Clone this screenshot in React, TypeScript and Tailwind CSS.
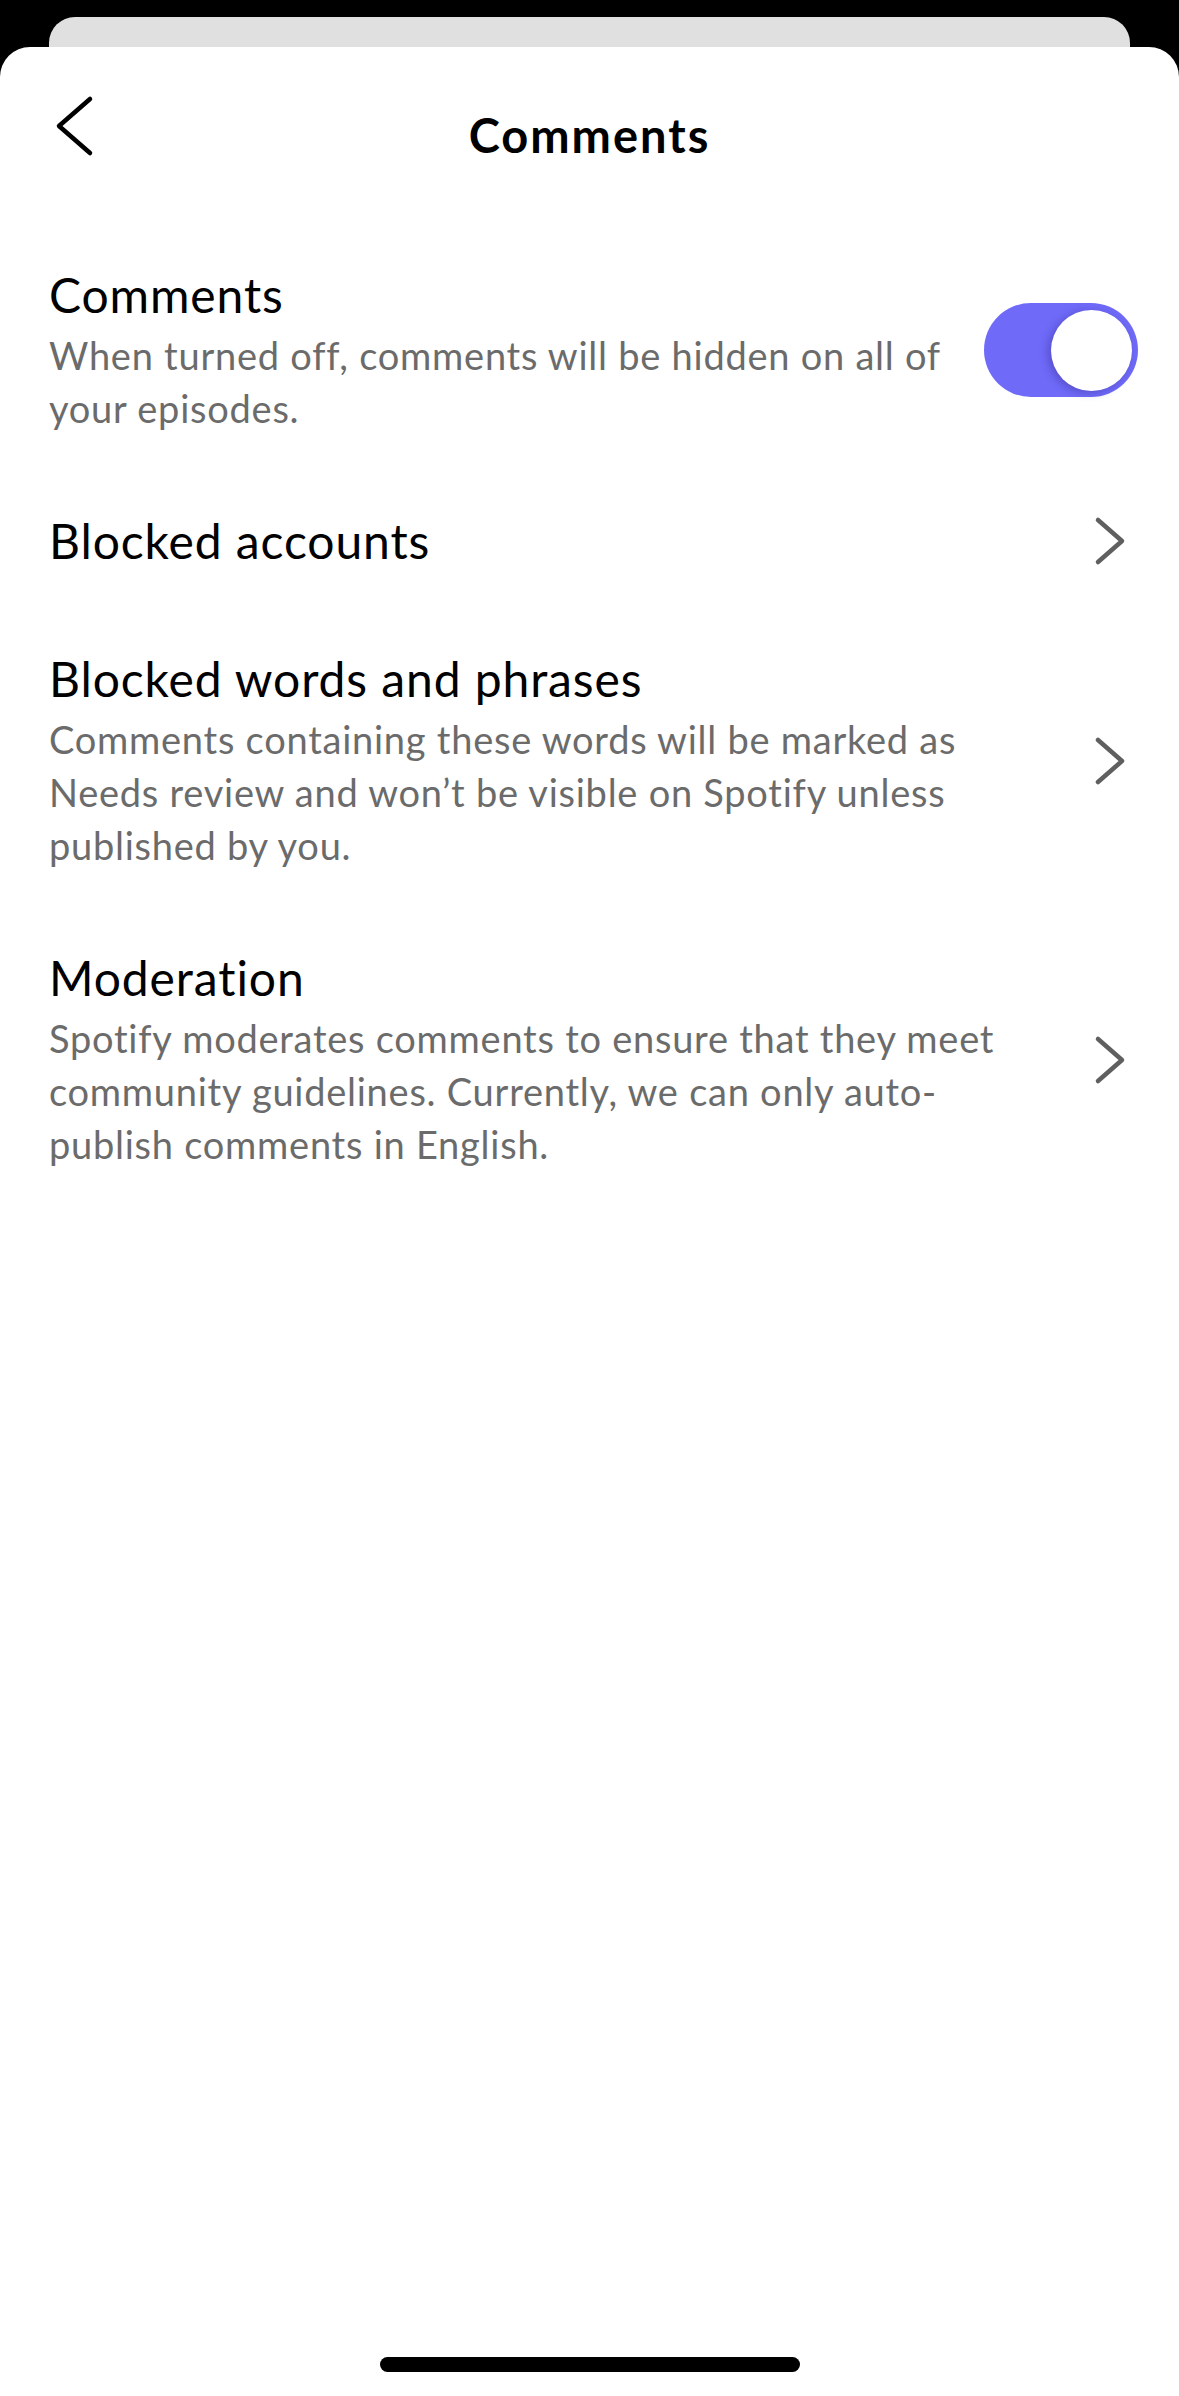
import React from "react";

const font = { fontFamily: "Lato, 'Noto Sans', sans-serif" };

function Chevron() {
  return (
    <svg width="40" height="56" viewBox="0 0 40 56" className="mr-[8px] shrink-0">
      <path d="M10 7 L34 28 L10 49" fill="none" stroke="#5f5f5f" strokeWidth="4.5" strokeLinecap="round" strokeLinejoin="round" />
    </svg>
  );
}

function Row({ title, lines, right, extraBottom }: { title: string; lines?: string[]; right: React.ReactNode; extraBottom?: boolean }) {
  return (
    <div className={`flex items-center justify-between pl-[49px] pr-[43px] pt-[38px] ${extraBottom ? "pb-[40px]" : "pb-[38px]"}`}>
      <div className="flex flex-col">
        <div className="text-[48px] leading-[60px] tracking-[0.9px] text-black whitespace-nowrap">{title}</div>
        {lines && (
          <div className="mt-[4px] text-[38px] leading-[53px] tracking-[0.75px] text-[#6b6b6b]">
            {lines.map((l, i) => (
              <div key={i} className="whitespace-nowrap">{l}</div>
            ))}
          </div>
        )}
      </div>
      {right}
    </div>
  );
}

function Toggle() {
  return (
    <div className="-mr-[2px] flex h-[94px] w-[154px] shrink-0 items-center justify-end rounded-full bg-[#6f6af8] pr-[6px]">
      <div className="h-[81px] w-[81px] rounded-full bg-white shadow-[-3px_2px_8px_rgba(40,30,120,0.35)]" />
    </div>
  );
}

export default function App() {
  return (
    <div className="flex h-[2396px] w-full flex-col bg-black" style={font}>
      <div className="mx-[49px] mt-[17px] h-[30px] shrink-0 rounded-t-[26px] bg-[#e0e0e0]" />
      <div className="flex flex-1 flex-col rounded-t-[30px] bg-white">
        <div className="grid h-[180px] grid-cols-[1fr_auto_1fr] items-start pt-[47px]">
          <div className="pl-[50px]">
            <svg width="48" height="64" viewBox="0 0 48 64">
              <path d="M40 5 L9 32 L40 59" fill="none" stroke="#000" strokeWidth="4.5" strokeLinecap="round" strokeLinejoin="round" />
            </svg>
          </div>
          <div className="mt-[19px] text-[47px] font-bold leading-[44px] tracking-[2px] text-black">Comments</div>
          <div />
        </div>
        <Row
          title="Comments"
          lines={["When turned off, comments will be hidden on all of", "your episodes."]}
          right={<Toggle />}
        />
        <Row title="Blocked accounts" right={<Chevron />} extraBottom />
        <Row
          title="Blocked words and phrases"
          lines={[
            "Comments containing these words will be marked as",
            "Needs review and won\u2019t be visible on Spotify unless",
            "published by you.",
          ]}
          right={<Chevron />}
        />
        <Row
          title="Moderation"
          lines={[
            "Spotify moderates comments to ensure that they meet",
            "community guidelines. Currently, we can only auto-",
            "publish comments in English.",
          ]}
          right={<Chevron />}
        />
        <div className="flex-1" />
        <div className="mb-[24px] flex justify-center">
          <div className="h-[15px] w-[420px] rounded-full bg-black" />
        </div>
      </div>
    </div>
  );
}
